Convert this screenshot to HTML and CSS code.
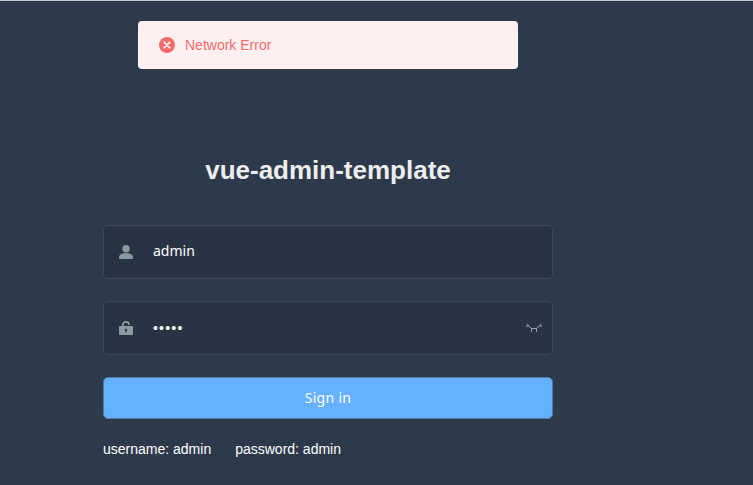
FILE: index.html
```html
<!DOCTYPE html>
<html lang="en">
<head>
    <meta charset="UTF-8">
    <title>vue-admin-template</title>
    <link rel="stylesheet" href="styles.css">
</head>
<body>

    <!-- error message -->
    <div class="message">
        <svg class="message-icon" width="16" height="16" viewBox="0 0 16 16">
            <circle cx="8" cy="8" r="8" fill="#f56c6c"/>
            <path d="M5.300 5.300l5.400 5.400M10.700 5.300l-5.400 5.400" stroke="#fef0f0" stroke-width="1.800" stroke-linecap="round"/>
        </svg>
        <span>Network Error</span>
    </div>

    <div class="login-container">
        <h3 class="title">vue-admin-template</h3>

        <div class="form-item">
            <svg class="field-icon" width="14" height="14" viewBox="0 0 14 14">
                <circle cx="7" cy="3.700" r="3.700" fill="#889aa4"/>
                <path d="M0 12.400C0 9.600 3 8 7 8s7 1.600 7 4.400V13.500c0 .3-.2.5-.5.5H.5c-.3 0-.5-.2-.5-.5z" fill="#889aa4"/>
            </svg>
            <span class="field-text">admin</span>
        </div>

        <div class="form-item">
            <svg class="field-icon" width="14" height="14" viewBox="0 0 14 14">
                <path d="M3 5.500V4a4 4 0 0 1 8 0h-1.700a2.300 2.300 0 0 0-4.600 0v1.500z" fill="#889aa4"/>
                <path d="M.6 5h12.800c.3 0 .6.300.6.600v7.800c0 .3-.3.600-.6.600H.6c-.3 0-.6-.3-.6-.6V5.600c0-.3.3-.6.600-.6z" fill="#889aa4"/>
                <circle cx="7" cy="9" r="1.200" fill="#283443"/>
                <rect x="6.500" y="9.500" width="1" height="2" fill="#283443"/>
            </svg>
            <span class="field-text dots">•••••</span>
            <svg class="eye" width="16" height="10" viewBox="0 0 16 10">
                <path d="M.5 1L5.500 5.500H10.500L15.500 1M5.500 5.500V9M10.500 5.500V9M0 3.500L3 2.500M16 3.500L13 2.500" fill="none" stroke="#9aabb5" stroke-width="1"/>
            </svg>
        </div>

        <button class="login-btn">Sign in</button>

        <div class="tips">
            <span>username: admin</span>
            <span>password: admin</span>
        </div>
    </div>

</body>
</html>
```

FILE: styles.css
```css
body {
    margin: 0;
    padding: 0;
    height: 484px;
    overflow: hidden;
    background-color: #2d3a4b;
    border-top: 1px solid #c4c8cd;
    font-family: "Liberation Sans", Arial, sans-serif;
}

/* error message */
.message {
    position: absolute;
    top: 21px;
    left: 138px;
    width: 380px;
    height: 48px;
    box-sizing: border-box;
    padding-left: 21px;
    display: flex;
    align-items: center;
    gap: 10px;
    background-color: #fef0f0;
    border-radius: 4px;
    color: #f56c6c;
    font-size: 14px;
}

.login-container {
    width: 450px;
    padding-top: 154px;
    margin-left: 103px;
}

.title {
    margin: 0 0 40px;
    font-size: 26px;
    line-height: 30px;
    font-weight: bold;
    color: #eee;
    text-align: center;
}

.form-item {
    height: 54px;
    box-sizing: border-box;
    margin-bottom: 22px;
    padding-left: 15px;
    display: flex;
    align-items: center;
    background-color: #283443;
    border: 1px solid rgba(255, 255, 255, 0.1);
    border-radius: 5px;
}

.field-icon {
    flex: none;
}

.field-text {
    margin-left: 20px;
    padding-bottom: 4px;
    font-family: "Noto Sans", sans-serif;
    font-size: 14px;
    color: #fff;
}

.dots {
    padding-bottom: 0;
    font-family: "Liberation Sans", Arial, sans-serif;
    letter-spacing: 1.2px;
}

.eye {
    margin-left: auto;
    margin-right: 10px;
}

.login-btn {
    display: block;
    width: 450px;
    height: 42px;
    margin: 0 0 20px;
    padding: 0 0 2px;
    background-color: #66b1ff;
    border: 1px solid #527aa6;
    border-radius: 5px;
    color: #fff;
    font-family: "Noto Sans", sans-serif;
    font-size: 14px;
    letter-spacing: 0.3px;
}

.tips {
    display: flex;
    gap: 24px;
    font-size: 14px;
    line-height: 21px;
    color: #fff;
}
```
